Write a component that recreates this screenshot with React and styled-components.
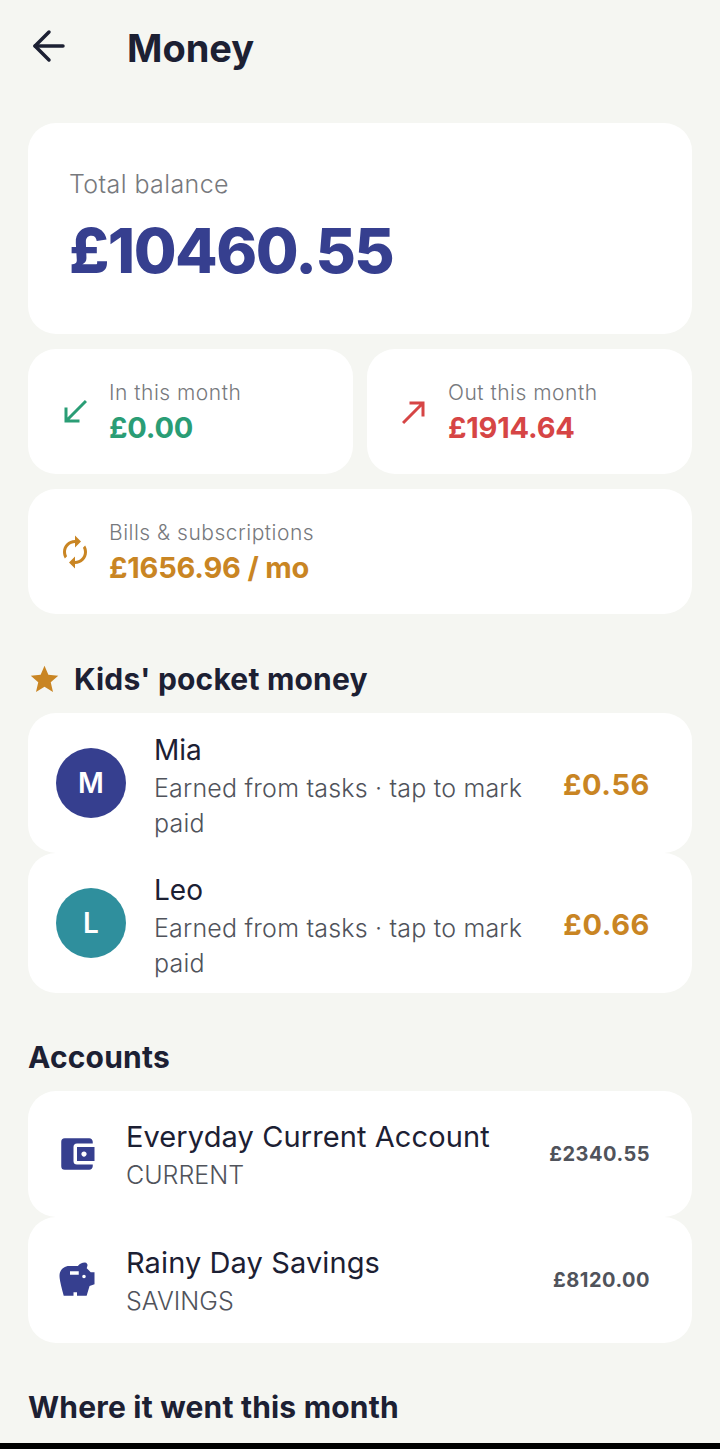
import styled, { createGlobalStyle } from "styled-components";
import { ArrowLeft } from "lucide-react";
import {
  MdCallReceived,
  MdCallMade,
  MdAutorenew,
  MdStar,
  MdAccountBalanceWallet,
  MdSavings,
} from "react-icons/md";

const Global = createGlobalStyle`
  html, body {
    margin: 0;
    padding: 0;
    background: #f5f6f2;
  }
  * {
    box-sizing: border-box;
  }
`;

const Page = styled.div`
  width: 720px;
  height: 1449px;
  overflow: hidden;
  display: flex;
  flex-direction: column;
  background: #f5f6f2;
  color: #1c2033;
  font-family: Inter, "Noto Sans", sans-serif;
`;

const Content = styled.div`
  flex: 1;
  min-height: 0;
  overflow: hidden;
  padding: 0 28px;
`;

const NavBar = styled.div`
  height: 6px;
  flex-shrink: 0;
  background: #000;
`;

const Header = styled.header`
  height: 95px;
  margin-bottom: 28px;
  display: flex;
  align-items: center;
  color: #1c2033;
`;

const BackButton = styled.div`
  width: 99px;
  display: flex;
  align-items: center;
  margin-left: -3px;
  margin-right: 3px;
  margin-bottom: 3px;
`;

const Title = styled.h1`
  margin: 0;
  font-size: 38px;
  font-weight: 700;
`;

const Card = styled.div`
  background: #fff;
  border-radius: 28px;
`;

const HeroCard = styled(Card)`
  height: 211px;
  padding: 46px 41px 0;
`;

const HeroLabel = styled.div`
  font-size: 25px;
  line-height: 30px;
  font-weight: 300;
  letter-spacing: 0.4px;
  color: #77797d;
`;

const HeroAmount = styled.div`
  margin-top: 17px;
  font-size: 62px;
  line-height: 70px;
  font-weight: 800;
  letter-spacing: -1.5px;
  color: #363f8f;
`;

const StatRow = styled.div`
  display: flex;
  gap: 14px;
  margin-top: 15px;
`;

const StatCard = styled(Card)`
  flex: 1;
  height: 125px;
  display: flex;
  align-items: center;
  padding: 0 28px 0 29px;
  gap: 16px;
`;

const StatIcon = styled.div`
  display: flex;
  font-size: 36px;
  color: ${(p) => p.$color};
`;

const StatText = styled.div`
  padding-top: 4px;
`;

const StatLabel = styled.div`
  font-size: 21px;
  line-height: 28px;
  font-weight: 300;
  letter-spacing: 0.5px;
  color: #77797d;
`;

const StatValue = styled.div`
  margin-top: 1px;
  font-size: 29px;
  line-height: 40px;
  font-weight: 700;
  letter-spacing: -0.2px;
  color: ${(p) => p.$color};
`;

const SectionHead = styled.div`
  display: flex;
  align-items: center;
  gap: 13px;
  font-size: 30px;
  line-height: 36px;
  font-weight: 700;
  letter-spacing: 0.2px;
  margin-top: ${(p) => p.$top}px;
  margin-bottom: 16px;
  svg {
    font-size: 33px;
    color: #c98523;
  }
`;

const KidRow = styled(Card)`
  height: 140px;
  display: flex;
  align-items: center;
  padding: 0 42px 0 28px;
`;

const Avatar = styled.div`
  width: 70px;
  height: 70px;
  flex-shrink: 0;
  border-radius: 50%;
  display: flex;
  align-items: center;
  justify-content: center;
  margin-right: 28px;
  background: ${(p) => p.$bg};
  color: #fff;
  font-size: 28px;
  font-weight: 600;
`;

const KidText = styled.div`
  flex: 1;
  min-width: 0;
  padding-top: 8px;
`;

const KidName = styled.div`
  font-size: 28px;
  line-height: 34px;
  font-weight: 400;
`;

const KidNote = styled.div`
  margin-top: 4px;
  width: 380px;
  font-size: 25px;
  line-height: 35px;
  font-weight: 300;
  letter-spacing: 0.2px;
  color: #50535b;
`;

const KidAmount = styled.div`
  font-size: 29px;
  font-weight: 700;
  letter-spacing: 0.6px;
  margin-top: 2px;
  color: #c98523;
`;

const AccountRow = styled(Card)`
  height: 126px;
  display: flex;
  align-items: center;
  padding: 0 42px 0 28px;
`;

const AccountIcon = styled.div`
  width: 42px;
  font-size: 42px;
  display: flex;
  justify-content: center;
  margin-right: 29px;
  color: #363f8f;
`;

const AccountText = styled.div`
  flex: 1;
  padding-top: 4px;
  margin-left: -1px;
`;

const AccountName = styled.div`
  font-size: 29px;
  line-height: 38px;
  font-weight: 400;
  letter-spacing: 0.1px;
`;

const AccountType = styled.div`
  font-size: 25px;
  line-height: 38px;
  font-weight: 300;
  color: #50535b;
`;

const AccountAmount = styled.div`
  font-size: 20px;
  font-weight: 700;
  letter-spacing: 0.5px;
  color: #50535b;
`;

const kids = [
  { initial: "M", name: "Mia", amount: "£0.56", bg: "#363f8f" },
  { initial: "L", name: "Leo", amount: "£0.66", bg: "#2f8f9d" },
];

const accounts = [
  { name: "Everyday Current Account", type: "CURRENT", amount: "£2340.55", Icon: MdAccountBalanceWallet },
  { name: "Rainy Day Savings", type: "SAVINGS", amount: "£8120.00", Icon: MdSavings },
];

export default function App() {
  return (
    <Page>
      <Global />
      <Content>
        <Header>
          <BackButton>
            <ArrowLeft size={48} strokeWidth={1.75} />
          </BackButton>
          <Title>Money</Title>
        </Header>
        <HeroCard>
          <HeroLabel>Total balance</HeroLabel>
          <HeroAmount>£10460.55</HeroAmount>
        </HeroCard>
        <StatRow>
          <StatCard>
            <StatIcon $color="#2a9d75">
              <MdCallReceived />
            </StatIcon>
            <StatText>
              <StatLabel>In this month</StatLabel>
              <StatValue $color="#2a9d75">£0.00</StatValue>
            </StatText>
          </StatCard>
          <StatCard>
            <StatIcon $color="#d64545">
              <MdCallMade />
            </StatIcon>
            <StatText>
              <StatLabel>Out this month</StatLabel>
              <StatValue $color="#d64545">£1914.64</StatValue>
            </StatText>
          </StatCard>
        </StatRow>
        <StatRow>
          <StatCard>
            <StatIcon $color="#c98523">
              <MdAutorenew />
            </StatIcon>
            <StatText>
              <StatLabel>Bills &amp; subscriptions</StatLabel>
              <StatValue $color="#c98523">£1656.96 / mo</StatValue>
            </StatText>
          </StatCard>
        </StatRow>
        <SectionHead $top={47}>
          <MdStar />
          Kids' pocket money
        </SectionHead>
        {kids.map((kid) => (
          <KidRow key={kid.name}>
            <Avatar $bg={kid.bg}>{kid.initial}</Avatar>
            <KidText>
              <KidName>{kid.name}</KidName>
              <KidNote>Earned from tasks · tap to mark paid</KidNote>
            </KidText>
            <KidAmount>{kid.amount}</KidAmount>
          </KidRow>
        ))}
        <SectionHead $top={46}>Accounts</SectionHead>
        {accounts.map(({ name, type, amount, Icon }) => (
          <AccountRow key={name}>
            <AccountIcon>
              <Icon />
            </AccountIcon>
            <AccountText>
              <AccountName>{name}</AccountName>
              <AccountType>{type}</AccountType>
            </AccountText>
            <AccountAmount>{amount}</AccountAmount>
          </AccountRow>
        ))}
        <SectionHead $top={46}>Where it went this month</SectionHead>
      </Content>
      <NavBar />
    </Page>
  );
}
